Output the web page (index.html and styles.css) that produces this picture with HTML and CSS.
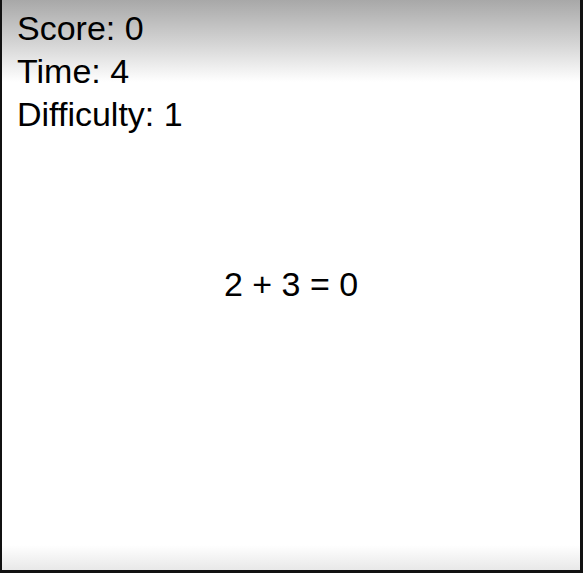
FILE: index.html
```html
<!DOCTYPE html>
<html lang="en">
<head>
    <meta charset="UTF-8">
    <meta name="viewport" content="width=device-width, initial-scale=1.0">
    <title>Math Game</title>
    <link rel="stylesheet" href="styles.css">
</head>
<body>
    <!-- Game Board -->
    <div class="board">
        <!-- Stats -->
        <div class="stats">
            <div class="stat">Score: <span id="score">0</span></div>
            <div class="stat">Time: <span id="time">4</span></div>
            <div class="stat">Difficulty: <span id="difficulty">1</span></div>
        </div>

        <!-- Question -->
        <div class="question">2 + 3 = 0</div>
    </div>
</body>
</html>
```

FILE: styles.css
```css
/* General Styling */
html, body {
    margin: 0;
    padding: 0;
    height: 100%;
}
body {
    font-family: 'Liberation Sans', Arial, sans-serif;
    color: #000;
    overflow: hidden;
}

/* Game Board - stats and question share one cell */
.board {
    box-sizing: border-box;
    height: 100%;
    display: grid;
    grid-template: 1fr / 1fr;
    border-left: 2px solid #111;
    border-right: 3px solid #111;
    border-bottom: 3px solid #111;
    background: linear-gradient(to bottom, #a8a8a8 0, #d6d6d6 45px, #ffffff 82px, #ffffff 545px, #e8e8e8 570px);
}

/* Stats */
.stats {
    grid-area: 1 / 1;
    align-self: start;
    padding: 7px 0 0 15px;
    font-size: 34px;
    line-height: 43px;
}

/* Question */
.question {
    grid-area: 1 / 1;
    align-self: center;
    justify-self: center;
    padding-bottom: 2px;
    font-size: 34px;
}
```
